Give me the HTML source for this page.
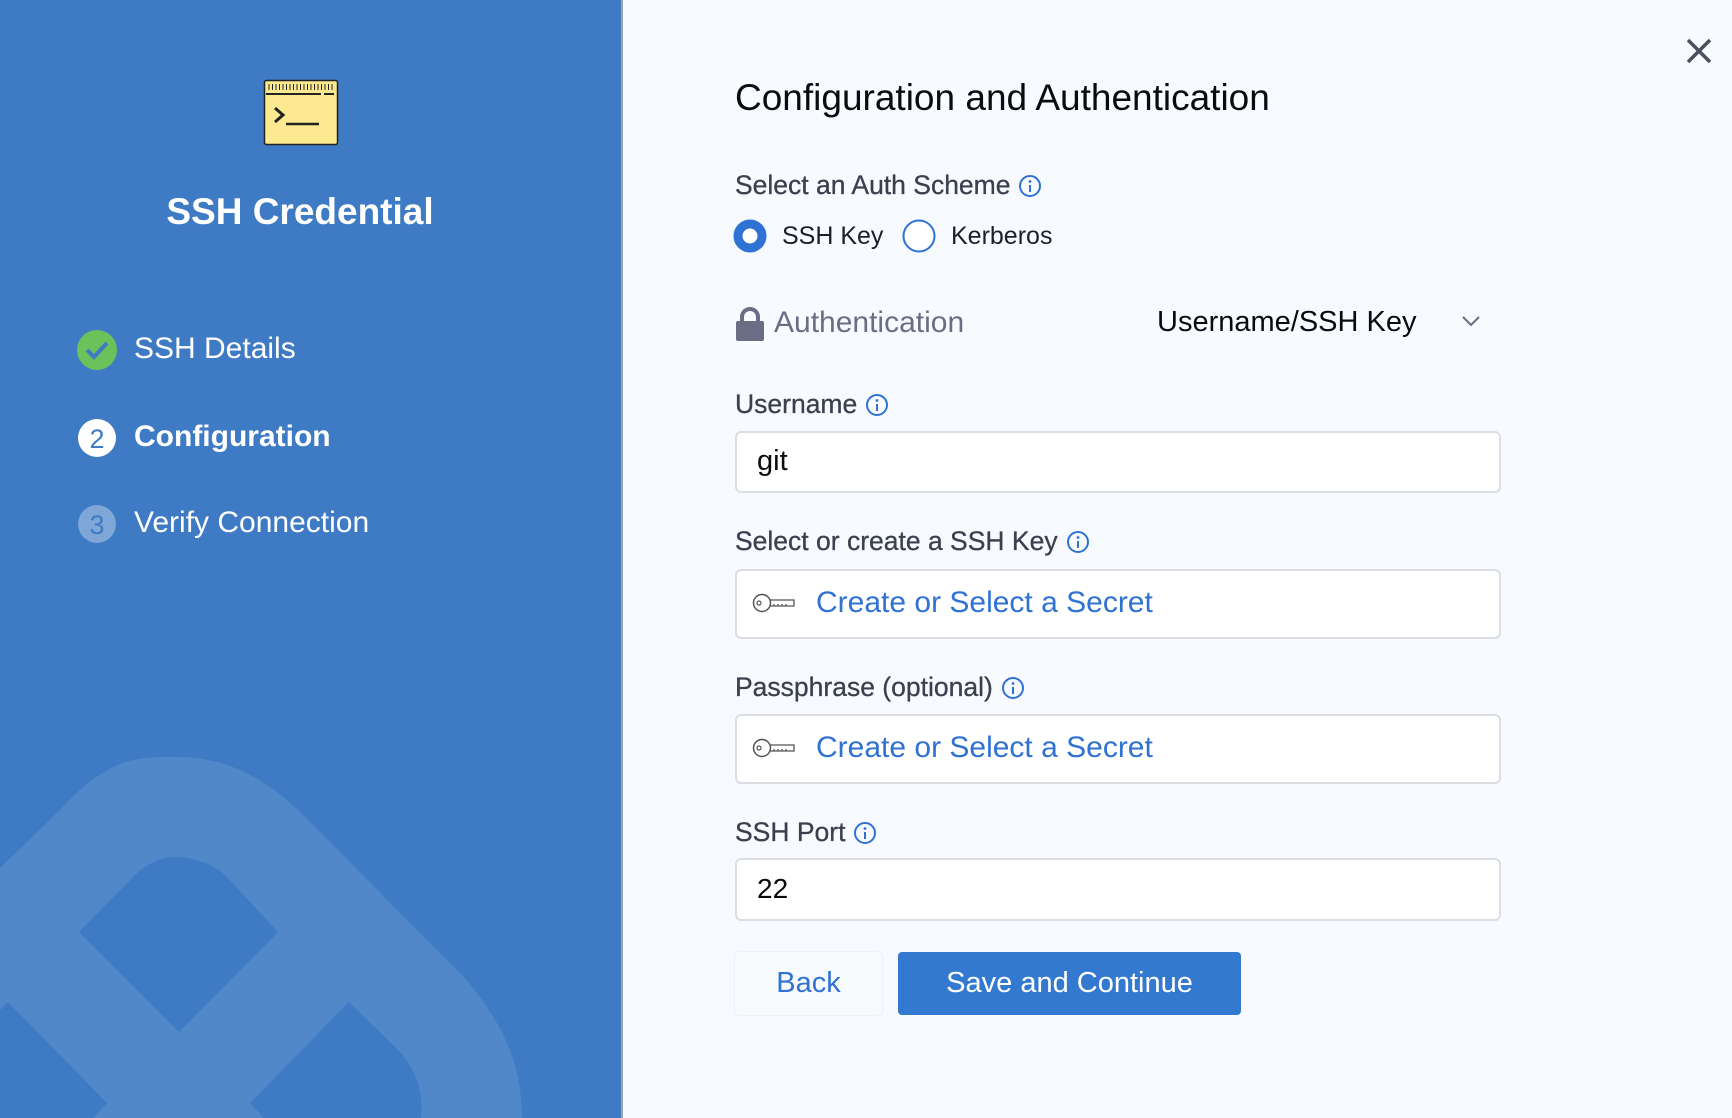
<!DOCTYPE html>
<html><head><meta charset="utf-8"><style>
*{margin:0;padding:0;box-sizing:border-box}
body{width:1732px;height:1118px;position:relative;overflow:hidden;background:#f7fbff;font-family:"Liberation Sans",sans-serif}
.l{position:absolute;left:0;top:0;width:621px;height:1118px;background:#3e7bc4;overflow:hidden}
.sep{position:absolute;left:621px;top:0;width:2px;height:1118px;background:#9aa4b0}
.a{position:absolute;white-space:nowrap}
.lab{font-size:26.5px;color:#3b3f4e;display:flex;align-items:center;gap:8px;-webkit-text-stroke:0.3px #3b3f4e}
.box{position:absolute;left:735px;width:766px;background:#fff;border:2px solid #dcdde3;border-radius:6px}
.sec{font-size:30px;color:#2f72d4}
</style></head><body>
<div class="l">
<svg width="621" height="1118" style="position:absolute;left:0;top:0">
<path d="M0,868 L60,810 C110,755 140,757 175,757 C210,757 250,765 298,810 L464,977 C500,1020 522,1060 522,1118 L0,1118 Z" fill="#5088c9"/>
<path d="M175,857 C160,857 145,865 135,875 L79,932 L179,1032 L278,932 L225,875 C210,862 190,857 175,857 Z" fill="#3e7bc4"/>
<path d="M0,1010 L8,1002 L107,1103 L93,1118 L0,1118 Z" fill="#3e7bc4"/>
<path d="M349,1002 L250,1103 L264,1118 L421,1118 C424,1090 415,1070 401,1053 Z" fill="#3e7bc4"/>
<g transform="translate(264,80)">
<rect x="0.5" y="0.5" width="73" height="64" rx="2" fill="#fde98f" stroke="#222" stroke-width="1.5"/>
<line x1="2" y1="14" x2="57" y2="14" stroke="#222" stroke-width="2"/>
<line x1="60" y1="14" x2="70" y2="14" stroke="#222" stroke-width="2"/>
<path d="M5 4v6M8.5 4v6M12 4v6M15.5 4v6M19 4v6M22.5 4v6M26 4v6M29.5 4v6M33 4v6M36.5 4v6M40 4v6M43.5 4v6M47 4v6M50.5 4v6M54 4v6M57.5 4v6M61 4v6M64.5 4v6M68 4v6" stroke="#222" stroke-width="1"/>
<path d="M11 28l8 7-8 7" fill="none" stroke="#222" stroke-width="3"/>
<line x1="22" y1="44" x2="55" y2="44" stroke="#222" stroke-width="2.5"/>
</g>
<circle cx="97" cy="350" r="20" fill="#6cc15a"/>
<path d="M87 350l7 7 13-14" fill="none" stroke="#3e7bc4" stroke-width="4"/>
<circle cx="97" cy="438" r="19" fill="#fff"/>
<text x="97" y="448" text-anchor="middle" font-size="27" fill="#3e7bc4" font-family="Liberation Sans">2</text>
<circle cx="97" cy="524" r="19" fill="#7ea6d6"/>
<text x="97" y="534" text-anchor="middle" font-size="27" fill="#3e7bc4" font-family="Liberation Sans">3</text>
</svg>
<div class="a" style="left:0;width:600px;text-align:center;top:191px;font-size:37px;font-weight:bold;color:#fff">SSH Credential</div>
<div class="a" style="left:134px;top:332px;font-size:30px;color:#fff">SSH Details</div>
<div class="a" style="left:134px;top:420px;font-size:30px;color:#fff;font-weight:bold">Configuration</div>
<div class="a" style="left:134px;top:506px;font-size:30px;color:#fff">Verify Connection</div>
</div>
<div class="sep"></div>
<svg width="26" height="26" style="position:absolute;left:1686px;top:38px"><path d="M2 2L24 24M24 2L2 24" stroke="#4a4f5c" stroke-width="3.5"/></svg>
<div class="a" style="left:735px;top:77px;font-size:37px;color:#0b0b0d">Configuration and Authentication</div>
<svg width="0" height="0" style="position:absolute"><defs><g id="i"><circle cx="12" cy="12" r="10" fill="none" stroke="#2f72d4" stroke-width="2"/><circle cx="12" cy="7.5" r="1.4" fill="#2f72d4"/><path d="M12 11v7" stroke="#2f72d4" stroke-width="2"/></g></defs></svg>
<div class="a lab" style="left:735px;top:170px">Select an Auth Scheme<svg width="24" height="24"><use href="#i"/></svg></div>
<svg class="a" style="left:733px;top:219px" width="34" height="34"><circle cx="17" cy="17" r="12" fill="#fff" stroke="#2f72d4" stroke-width="9"/></svg>
<div class="a" style="left:782px;top:222px;font-size:25px;color:#1e1f24">SSH Key</div>
<svg class="a" style="left:902px;top:219px" width="34" height="34"><circle cx="17" cy="17" r="15.5" fill="#fff" stroke="#2f72d4" stroke-width="2"/></svg>
<div class="a" style="left:951px;top:222px;font-size:25px;color:#1e1f24">Kerberos</div>
<svg class="a" style="left:736px;top:307px" width="28" height="34"><path d="M6 15V10a8 8 0 0 1 16 0v5" fill="none" stroke="#6b6d85" stroke-width="4"/><rect x="0" y="14" width="28" height="20" rx="2" fill="#6b6d85"/></svg>
<div class="a" style="left:774px;top:306px;font-size:30px;color:#6b6d85">Authentication</div>
<div class="a" style="left:1157px;top:306px;font-size:29px;color:#0b0b0d">Username/SSH Key</div>
<svg class="a" style="left:1462px;top:316px" width="18" height="12"><path d="M1 1l8 8 8-8" fill="none" stroke="#6b6d85" stroke-width="2"/></svg>
<div class="a lab" style="left:735px;top:389px">Username<svg width="24" height="24"><use href="#i"/></svg></div>
<div class="box" style="top:431px;height:62px"></div>
<div class="a" style="left:757px;top:445px;font-size:29px;color:#0b0b0d">git</div>
<div class="a lab" style="left:735px;top:526px">Select or create a SSH Key<svg width="24" height="24"><use href="#i"/></svg></div>
<div class="box" style="top:569px;height:70px"></div>
<svg class="a" style="left:752px;top:592px" width="44" height="22"><circle cx="10" cy="11" r="8.5" fill="none" stroke="#555" stroke-width="1.5"/><circle cx="7" cy="11" r="2" fill="none" stroke="#555" stroke-width="1.2"/><path d="M18 8h24v6H18M22 14v-2M26 14v-2M30 14v-2M34 14v-2" fill="none" stroke="#555" stroke-width="1.3"/></svg>
<div class="a sec" style="left:816px;top:586px">Create or Select a Secret</div>
<div class="a lab" style="left:735px;top:672px">Passphrase (optional)<svg width="24" height="24"><use href="#i"/></svg></div>
<div class="box" style="top:714px;height:70px"></div>
<svg class="a" style="left:752px;top:737px" width="44" height="22"><circle cx="10" cy="11" r="8.5" fill="none" stroke="#555" stroke-width="1.5"/><circle cx="7" cy="11" r="2" fill="none" stroke="#555" stroke-width="1.2"/><path d="M18 8h24v6H18M22 14v-2M26 14v-2M30 14v-2M34 14v-2" fill="none" stroke="#555" stroke-width="1.3"/></svg>
<div class="a sec" style="left:816px;top:731px">Create or Select a Secret</div>
<div class="a lab" style="left:735px;top:817px">SSH Port<svg width="24" height="24"><use href="#i"/></svg></div>
<div class="box" style="top:858px;height:63px"></div>
<div class="a" style="left:757px;top:873px;font-size:28px;color:#0b0b0d">22</div>
<div class="a" style="left:735px;top:952px;width:147px;height:63px;background:#f8fbfe;border-radius:5px;box-shadow:0 0 2px rgba(0,0,0,.12);font-size:29px;color:#2f72d4;text-align:center;line-height:63px">Back</div>
<div class="a" style="left:898px;top:952px;width:343px;height:63px;background:#3379cf;border-radius:4px;font-size:29px;color:#fff;text-align:center;line-height:63px">Save and Continue</div>
</body></html>
